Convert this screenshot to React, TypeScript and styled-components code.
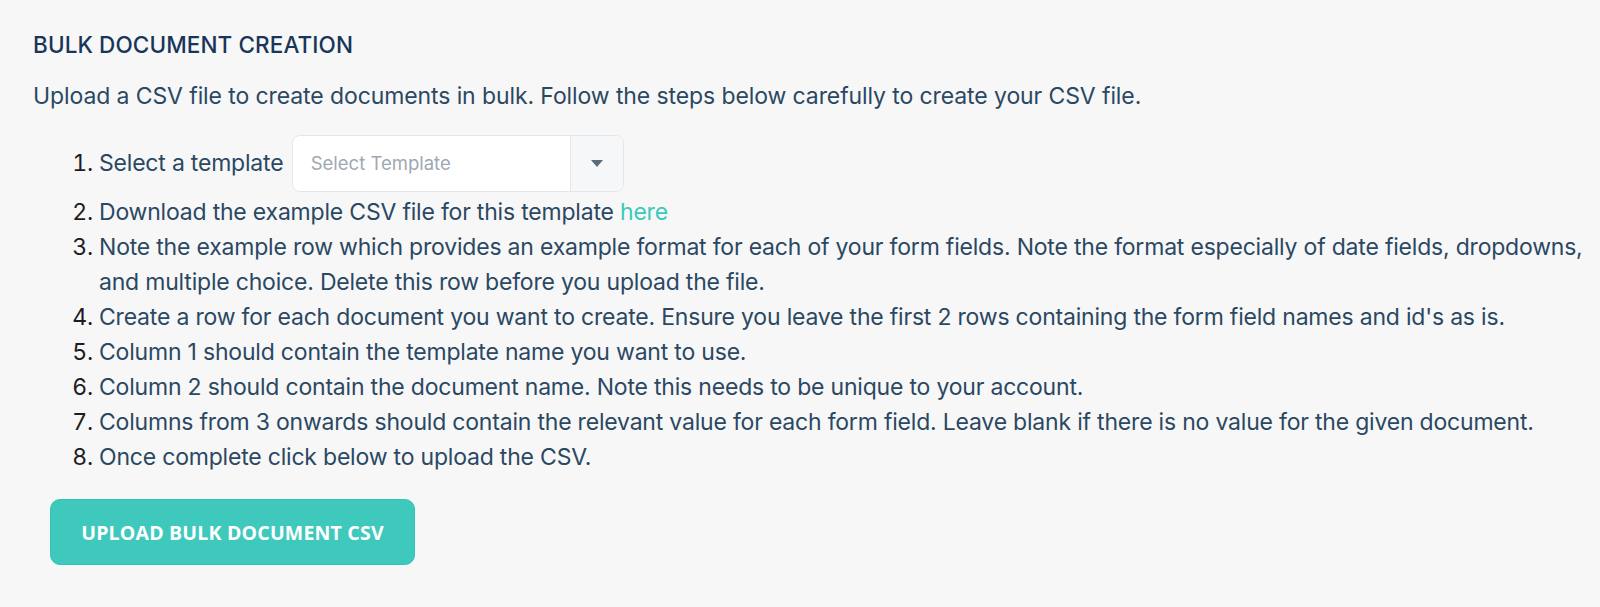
import React from "react";
import styled, { createGlobalStyle } from "styled-components";

const GlobalStyle = createGlobalStyle`
  html, body {
    margin: 0;
    padding: 0;
    background: #f7f7f7;
  }
  body {
    font-family: Inter, "Noto Sans", "Liberation Sans", sans-serif;
    -webkit-font-smoothing: antialiased;
  }
`;

const textSteps = [
  "Note the example row which provides an example format for each of your form fields. Note the format especially of date fields, dropdowns, and multiple choice. Delete this row before you upload the file.",
  "Create a row for each document you want to create. Ensure you leave the first 2 rows containing the form field names and id's as is.",
  "Column 1 should contain the template name you want to use.",
  "Column 2 should contain the document name. Note this needs to be unique to your account.",
  "Columns from 3 onwards should contain the relevant value for each form field. Leave blank if there is no value for the given document.",
  "Once complete click below to upload the CSV.",
];

export default function App() {
  return (
    <>
      <GlobalStyle />
      <Page>
        <Title>BULK DOCUMENT CREATION</Title>
        <Intro>
          Upload a CSV file to create documents in bulk. Follow the steps below
          carefully to create your CSV file.
        </Intro>
        <Steps>
          <Step>
            Select a template{" "}
            <Select>
              <Placeholder>Select Template</Placeholder>
              <ArrowBox>
                <svg width="12" height="7" viewBox="0 0 12 7">
                  <path d="M0 0 H12 L6 7 Z" fill="#5c6b7a" />
                </svg>
              </ArrowBox>
            </Select>
          </Step>
          <Step>
            Download the example CSV file for this template{" "}
            <Link href="#">here</Link>
          </Step>
          {textSteps.map((s, i) => (
            <Step key={i}>{s}</Step>
          ))}
        </Steps>
        <UploadButton>UPLOAD BULK DOCUMENT CSV</UploadButton>
      </Page>
    </>
  );
}

// --------styled components---------
const Page = styled.div`
  padding: 30px 4px 40px 33px;
`;

const Title = styled.h1`
  margin: 0;
  font-size: 22.5px;
  line-height: 30px;
  font-weight: 500;
  color: #17365a;
  letter-spacing: 0.1px;
`;

const Intro = styled.p`
  margin: 19px 0 0;
  font-size: 23px;
  line-height: 35px;
  color: #2b4863;
  letter-spacing: -0.1px;
`;

const Steps = styled.ol`
  margin: 21px 0 0;
  padding-left: 66px;
  font-size: 23px;
  line-height: 35px;
  color: #2b4863;
  letter-spacing: -0.2px;
`;

const Step = styled.li`
  &::marker {
    color: #1d1d1f;
  }
`;

const Select = styled.div`
  display: inline-flex;
  vertical-align: middle;
  width: 332px;
  height: 57px;
  box-sizing: border-box;
  margin: 0 0 3px 2px;
  background: #fff;
  border: 1px solid #e4e7ea;
  border-radius: 8px;
  overflow: hidden;
  letter-spacing: 0;
`;

const Placeholder = styled.span`
  flex: 1;
  display: flex;
  align-items: center;
  padding-left: 18px;
  font-size: 18.5px;
  color: #9ea8b3;
`;

const ArrowBox = styled.span`
  width: 52px;
  display: flex;
  align-items: center;
  justify-content: center;
  border-left: 1px solid #e4e7ea;
  background: #f6f7f8;
`;

const Link = styled.a`
  color: #3cc8bb;
  text-decoration: none;
`;

const UploadButton = styled.button`
  display: block;
  margin: 24px 0 0 17px;
  width: 365px;
  height: 66px;
  border: 1px solid #35c4b7;
  border-radius: 10px;
  background: #3fc9bd;
  color: #fff;
  font-family: "Open Sans", Lato, sans-serif;
  font-weight: 700;
  font-size: 19.5px;
  letter-spacing: 0.2px;
  cursor: pointer;
`;
